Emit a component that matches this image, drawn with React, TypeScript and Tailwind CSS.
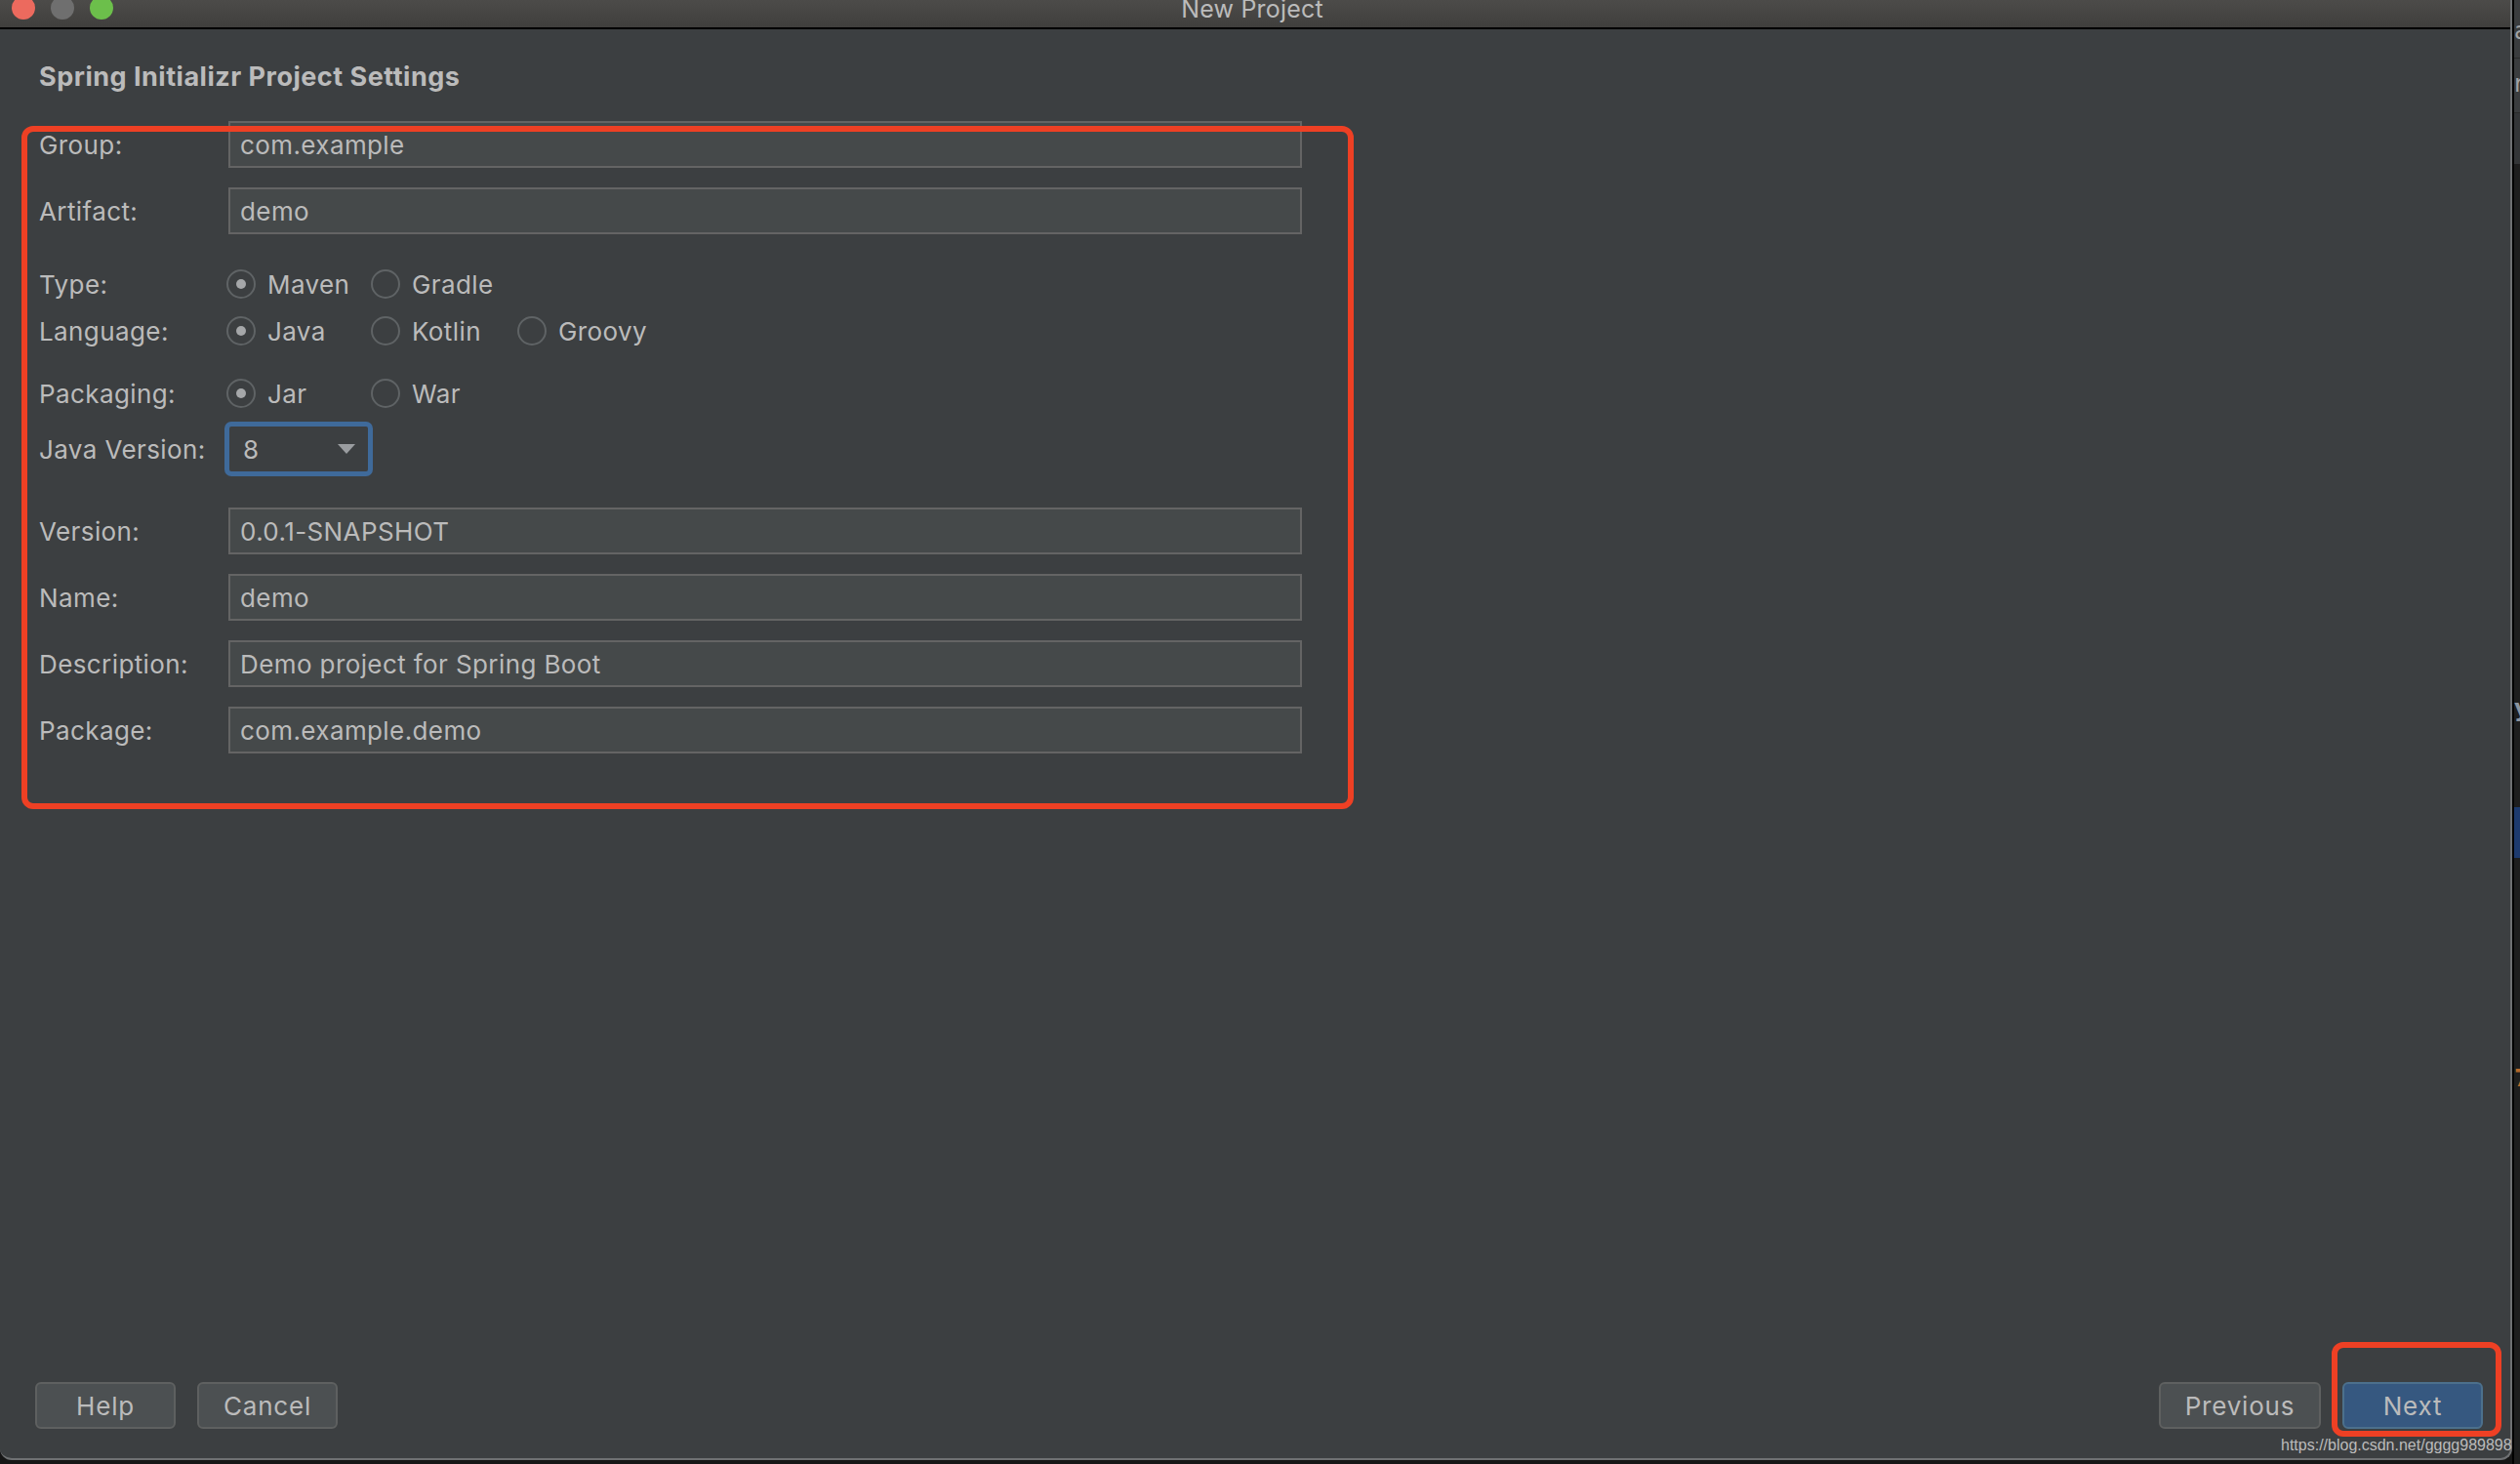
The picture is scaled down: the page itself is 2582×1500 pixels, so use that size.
import React from "react";

const font = { fontFamily: "Inter, 'Noto Sans', sans-serif" };

function Row({ label, children, className = "" }: { label: string; children: React.ReactNode; className?: string }) {
  return (
    <div className={`flex items-center text-[26px] tracking-[0.4px] text-[#bbbbbb] ${className}`}>
      <div className="w-[194px] shrink-0 whitespace-nowrap">{label}</div>
      {children}
    </div>
  );
}

function Field({ label, value, className = "" }: { label: string; value: string; className?: string }) {
  return (
    <Row label={label} className={`h-[48px] ${className}`}>
      <div className="h-[48px] w-[1100px] border-2 border-[#646464] bg-[#45494a] pl-[10px] leading-[46px] whitespace-nowrap">{value}</div>
    </Row>
  );
}

function Radio({ label, checked = false, className = "w-[148px]" }: { label: string; checked?: boolean; className?: string }) {
  return (
    <div className={`flex items-center gap-[12px] ${className}`}>
      <div className="w-[30px] h-[30px] rounded-full border-2 border-[#5f6365] bg-[#3c3f41] flex items-center justify-center">
        {checked && <div className="w-[10px] h-[10px] rounded-full bg-[#a5a7a9]" />}
      </div>
      <span>{label}</span>
    </div>
  );
}

function Btn({ children, primary = false, className = "" }: { children: React.ReactNode; primary?: boolean; className?: string }) {
  return (
    <div
      className={`h-[48px] rounded-[6px] border-2 flex items-center justify-center text-[26px] tracking-[0.8px] text-[#bbbbbb] ${
        primary ? "bg-[#365880] border-[#4c708c]" : "bg-[#4c5052] border-[#5e6060]"
      } ${className}`}
    >
      {children}
    </div>
  );
}

export default function App() {
  return (
    <div className="relative w-[2582px] h-[1500px] bg-[#161616] overflow-hidden flex" style={font}>
      <div className="w-[2574px] h-[1496px] shrink-0 flex flex-col bg-[#3c3f41] rounded-bl-[12px] rounded-br-[12px] border-r-2 border-b-2 border-r-[#6e7072] border-b-[#6e7072] overflow-hidden">
        <div className="relative h-[30px] shrink-0 border-b-2 border-black bg-gradient-to-b from-[#4c4b49] to-[#403f3d] flex items-center justify-center overflow-hidden">
          <div className="absolute left-[12px] top-[-4px] flex gap-[16px]">
            <div className="w-[24px] h-[24px] rounded-full bg-[#ec6a5e]" />
            <div className="w-[24px] h-[24px] rounded-full bg-[#6f6f6f]" />
            <div className="w-[24px] h-[24px] rounded-full bg-[#6cbf4b]" />
          </div>
          <span className="text-[25px] text-[#bbbbbb] leading-none mt-[-9px] mr-[6px] tracking-[0.2px]">New Project</span>
        </div>

        <div className="flex-1 flex flex-col min-h-0">
          <div className="pl-[40px] flex-1">
            <div className="mt-[29px] h-[40px] leading-[40px] text-[27px] font-bold tracking-[0.5px] text-[#bbbbbb]">Spring Initializr Project Settings</div>
            <Field label="Group:" value="com.example" className="mt-[25px]" />
            <Field label="Artifact:" value="demo" className="mt-[20px]" />
            <Row label="Type:" className="h-[48px] mt-[27px]">
              <div className="flex ml-[-2px]">
                <Radio label="Maven" checked />
                <Radio label="Gradle" className="w-[150px]" />
              </div>
            </Row>
            <Row label="Language:" className="h-[48px]">
              <div className="flex ml-[-2px]">
                <Radio label="Java" checked />
                <Radio label="Kotlin" className="w-[150px]" />
                <Radio label="Groovy" />
              </div>
            </Row>
            <Row label="Packaging:" className="h-[48px] mt-[16px]">
              <div className="flex ml-[-2px]">
                <Radio label="Jar" checked />
                <Radio label="War" className="w-[150px]" />
              </div>
            </Row>
            <Row label="Java Version:" className="h-[56px] mt-[5px]">
              <div className="ml-[-4px] w-[152px] h-[56px] rounded-[7px] border-[5px] border-[#3f6a9a] bg-[#3c3f41] flex items-center justify-between pl-[14px] pr-[13px]">
                <span>8</span>
                <svg width="18" height="10" viewBox="0 0 18 10"><path d="M0 0H18L9 10Z" fill="#9a9da0" /></svg>
              </div>
            </Row>
            <Field label="Version:" value="0.0.1-SNAPSHOT" className="mt-[32px]" />
            <Field label="Name:" value="demo" className="mt-[20px]" />
            <Field label="Description:" value="Demo project for Spring Boot" className="mt-[20px]" />
            <Field label="Package:" value="com.example.demo" className="mt-[20px]" />
          </div>
          <div className="flex justify-between pl-[36px] pr-[28px] pb-[30px]">
            <div className="flex gap-[22px]">
              <Btn className="w-[144px]">Help</Btn>
              <Btn className="w-[144px]">Cancel</Btn>
            </div>
            <div className="flex gap-[22px]">
              <Btn className="w-[166px]">Previous</Btn>
              <Btn primary className="w-[144px]">Next</Btn>
            </div>
          </div>
        </div>
      </div>

      <div className="flex-1 flex flex-col bg-[#1e1e1e] border-l-2 border-black overflow-hidden text-[24px] leading-none whitespace-nowrap" style={{ fontFamily: "'DejaVu Sans', sans-serif" }}>
        <div className="h-[60px] bg-[#3a3c3e] border-b border-[#2b2b2b] pt-[20px] text-[#a0a2a4]">a</div>
        <div className="h-[56px] bg-[#3a3c3e] border-b border-[#2b2b2b] pt-[14px] text-[#a0a2a4]">r</div>
        <div className="h-[52px] bg-[#333537]" />
        <div className="h-[547px] pt-[546px] text-[#8a94a0] font-bold">y</div>
        <div className="h-[112px]" />
        <div className="h-[52px] bg-[#1d3a6e]" />
        <div className="pt-[214px] text-[#b5692b] font-bold">7</div>
      </div>

      <div className="absolute left-[22px] top-[129px] w-[1365px] h-[700px] border-[6px] border-[#ee4024] rounded-[12px]" />
      <div className="absolute left-[2389px] top-[1375px] w-[174px] h-[97px] border-[6px] border-[#ee4024] rounded-[12px]" />
      <div className="absolute left-[2337px] top-[1471px] text-[16px] leading-[20px] text-[#bbbbbb] whitespace-nowrap" style={{ fontFamily: "'Liberation Sans', sans-serif" }}>
        https://blog.csdn.net/gggg989898
      </div>
    </div>
  );
}
